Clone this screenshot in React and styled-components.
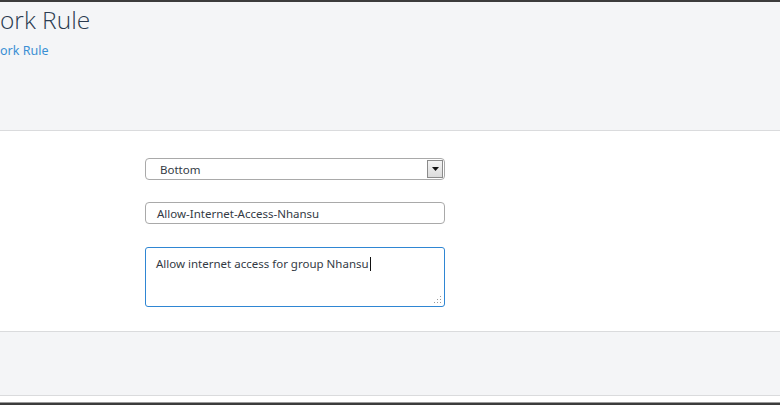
import React from 'react';
import styled, { createGlobalStyle } from 'styled-components';

const GlobalStyle = createGlobalStyle`
  html, body {
    margin: 0;
    padding: 0;
    background: #ffffff;
    overflow: hidden;
  }
  body {
    font-family: "Noto Sans", "Open Sans", sans-serif;
  }
`;

const Page = styled.div`
  width: 780px;
  height: 405px;
  display: flex;
  flex-direction: column;
  border-top: 2px solid #3c3c3c;
  box-sizing: border-box;
  overflow: hidden;
`;

const Header = styled.header`
  height: 129px;
  flex: none;
  background: #f4f5f7;
  border-bottom: 1px solid #dadbdd;
  padding-top: 3px;
  box-sizing: border-box;
`;

const Title = styled.h1`
  margin: 0;
  font-family: "Open Sans", "Noto Sans", sans-serif;
  font-weight: 300;
  font-size: 24.5px;
  line-height: 30px;
  color: #2a3b50;
  white-space: nowrap;
`;

const Crumb = styled.a`
  display: block;
  margin-top: 8px;
  font-size: 12.5px;
  line-height: 16px;
  color: #3a8fd4;
  text-decoration: none;
`;

const Content = styled.main`
  height: 201px;
  flex: none;
  background: #ffffff;
  border-bottom: 1px solid #dadbdd;
  box-sizing: border-box;
  padding: 27px 0 0 145px;
  display: flex;
  flex-direction: column;
  gap: 22px;
`;

const Field = styled.div`
  width: 300px;
  height: 22px;
  box-sizing: border-box;
  border: 1px solid ${p => (p.$focused ? '#2f86d3' : '#a9a9a9')};
  border-radius: ${p => (p.$round ? '4px' : '3px')};
  background: #fff;
  display: flex;
  align-items: center;
  font-size: 11.5px;
  color: #333a44;
  position: relative;
`;

const SelectText = styled.span`
  flex: 1;
  padding-left: 14px;
`;

const ArrowButton = styled.span`
  width: 16px;
  height: 18px;
  margin-right: 1px;
  box-sizing: border-box;
  border: 1px solid #8b8b8b;
  background: linear-gradient(#f4f4f4, #dcdcdc);
  display: flex;
  align-items: center;
  justify-content: center;
`;

const InputText = styled.span`
  padding-left: 11px;
  white-space: nowrap;
`;

const Area = styled(Field)`
  height: 60px;
  align-items: flex-start;
  margin-top: 1px;
  padding: 8px 10px;
`;

const Caret = styled.span`
  display: inline-block;
  width: 1px;
  height: 14px;
  background: #111;
  vertical-align: -3px;
  margin-left: 1px;
`;

const Grip = styled.svg`
  position: absolute;
  right: 2px;
  bottom: 2px;
`;

const Footer = styled.footer`
  height: 64px;
  flex: none;
  background: #f4f5f7;
  border-bottom: 1px solid #dadbdd;
  box-sizing: border-box;
`;

const BottomEdge = styled.div`
  flex: 1;
  background: #ffffff;
  border-bottom: 2px solid #3c3c3c;
  box-shadow: inset 0 -1px 0 #9a9a9a;
`;

const App = () => {
  return (
    <>
      <GlobalStyle />
      <Page>
        <Header>
          <Title>ork Rule</Title>
          <Crumb href="#">ork Rule</Crumb>
        </Header>
        <Content>
          <Field $round>
            <SelectText>Bottom</SelectText>
            <ArrowButton>
              <svg width="7" height="4" viewBox="0 0 7 4">
                <path d="M0 0h7L3.5 4z" fill="#111" />
              </svg>
            </ArrowButton>
          </Field>
          <Field $round>
            <InputText>Allow-Internet-Access-Nhansu</InputText>
          </Field>
          <Area $focused>
            <span>
              Allow internet access for group Nhansu
              <Caret />
            </span>
            <Grip width="8" height="8" viewBox="0 0 8 8">
              <rect x="6" y="0" width="1" height="1" fill="#9a9a9a" />
              <rect x="3" y="3" width="1" height="1" fill="#9a9a9a" />
              <rect x="6" y="3" width="1" height="1" fill="#9a9a9a" />
              <rect x="0" y="6" width="1" height="1" fill="#9a9a9a" />
              <rect x="3" y="6" width="1" height="1" fill="#9a9a9a" />
              <rect x="6" y="6" width="1" height="1" fill="#9a9a9a" />
            </Grip>
          </Area>
        </Content>
        <Footer />
        <BottomEdge />
      </Page>
    </>
  );
};

export default App;
